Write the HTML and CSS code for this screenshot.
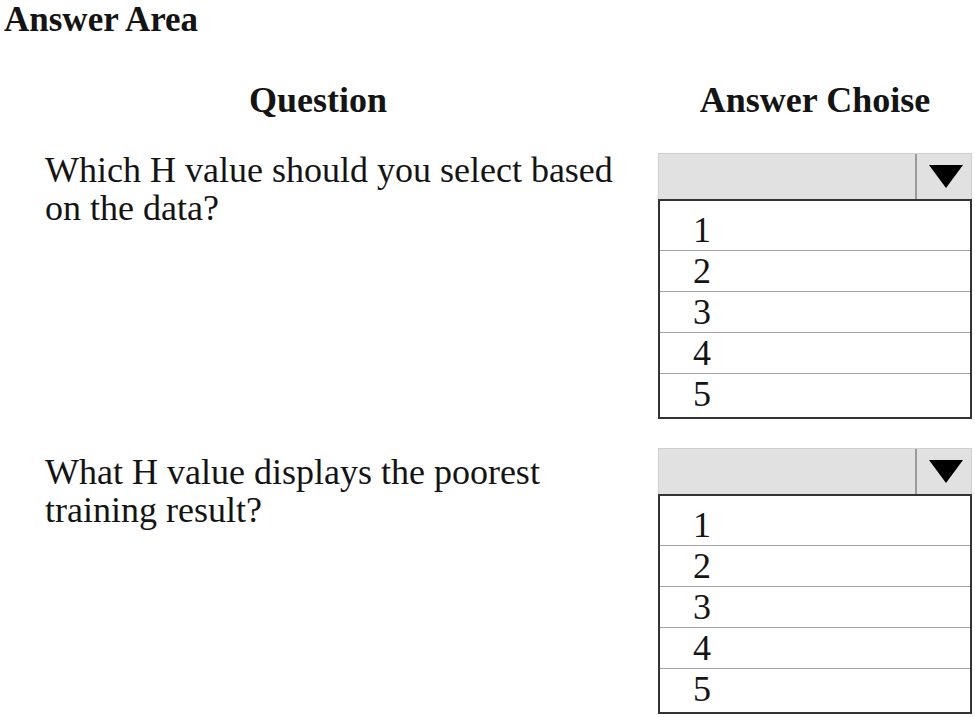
FILE: index.html
```html
<!DOCTYPE html>
<html>
<head>
    <title>Answer Area</title>
    <link rel="stylesheet" href="styles.css">
</head>
<body>
    <h1 class="title">Answer Area</h1>

    <div class="answer-grid">
        <div class="head head-question">Question</div>
        <div class="head head-answer">Answer Choise</div>

        <div class="question">Which H value should you select based on the data?</div>
        <div class="choice">
            <div class="select-bar">
                <div class="select-value"></div>
                <div class="select-arrow"><span class="triangle"></span></div>
            </div>
            <ul class="options">
                <li>1</li>
                <li>2</li>
                <li>3</li>
                <li>4</li>
                <li>5</li>
            </ul>
        </div>

        <div class="question second">What H value displays the poorest training result?</div>
        <div class="choice">
            <div class="select-bar">
                <div class="select-value"></div>
                <div class="select-arrow"><span class="triangle"></span></div>
            </div>
            <ul class="options">
                <li>1</li>
                <li>2</li>
                <li>3</li>
                <li>4</li>
                <li>5</li>
            </ul>
        </div>
    </div>
</body>
</html>
```

FILE: styles.css
```css
body, html {
    margin: 0;
    background-color: #fff;
    color: #141414;
    font-family: "Liberation Serif", "Times New Roman", serif;
    font-size: 36px;
}

.title {
    margin: 0;
    padding-left: 4px;
    font-size: 35px;
    line-height: 40px;
    font-weight: bold;
}

.answer-grid {
    display: grid;
    grid-template-columns: 658px 314px;
    margin-top: 41px;
}

.head {
    font-weight: bold;
    line-height: 38px;
    text-align: center;
    margin-bottom: 32px;
}

.head-question {
    padding-right: 22px;
}

.question {
    padding-left: 45px;
    width: 585px;
    line-height: 38px;
}

.question.second {
    padding-top: 7px;
}

.choice {
    padding-top: 2px;
}

.choice + .question,
.choice + .question + .choice {
    margin-top: 27px;
}

.select-bar {
    display: flex;
    height: 45px;
    background-color: #e1e1e1;
    border: 1px solid #cfcfcf;
    border-bottom: none;
}

.select-value {
    flex: 1;
}

.select-arrow {
    width: 54px;
    border-left: 2px solid #9a9a9a;
    display: flex;
    align-items: center;
    justify-content: center;
}

.triangle {
    width: 0;
    height: 0;
    border-left: 17px solid transparent;
    border-right: 17px solid transparent;
    border-top: 23px solid #000;
    margin-left: 4px;
}

.options {
    list-style: none;
    margin: 0;
    padding: 9px 0 3px 0;
    border: 2px solid #333;
}

.options li {
    height: 40px;
    line-height: 40px;
    padding-left: 33px;
    border-bottom: 1px solid #a3a3a3;
}

.options li:last-child {
    border-bottom: none;
}
```
